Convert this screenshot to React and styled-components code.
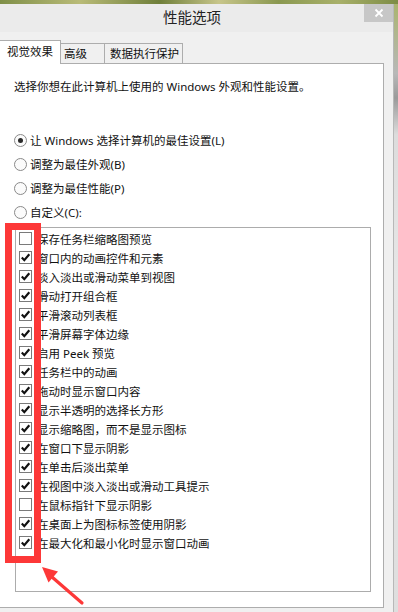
import React from "react";
import styled, { createGlobalStyle } from "styled-components";

const Global = createGlobalStyle`
  html, body { margin: 0; padding: 0; }
  body {
    width: 398px; height: 612px; overflow: hidden;
    font-family: "Noto Sans", "Noto Sans CJK SC", sans-serif;
  }
  * { box-sizing: border-box; }
`;

const Page = styled.div`
  position: relative;
  width: 398px;
  height: 612px;
  display: flex;
  padding: 4px 4px 0 0;
  background:
    linear-gradient(90deg, #7f8f48 0%, #b9bb78 20%, #6f7f3a 40%, #c7c58a 55%, #8a9850 70%, #a8b06a 85%, #7d8c45 100%) top / 100% 4px no-repeat,
    linear-gradient(180deg, #a9b46a 0%, #b8b8b8 12%, #9a9a9a 16%, #dcdcdc 22%, #e6e6e6 45%, #dedede 100%);
`;

const Window = styled.div`
  flex: 1;
  display: flex;
  flex-direction: column;
  background: #f0f0f0;
  border-right: 1px solid #b8b8b8;
`;

const TitleBar = styled.div`
  height: 28px;
  display: grid;
  grid-template-columns: 1fr auto 1fr;
  align-items: start;
  background: #ebebeb;
`;

const Title = styled.div`
  grid-column: 2;
  padding: 4px 9px 0 0;
  font-size: 14.5px;
  line-height: 18px;
  color: #222;
  font-family: "Noto Sans CJK SC", sans-serif;
`;

const CloseButton = styled.div`
  grid-column: 3;
  justify-self: end;
  width: 29px;
  height: 18px;
  background: #c7c7c7;
  display: flex;
  align-items: center;
  justify-content: center;
`;

const Body = styled.div`
  flex: 1;
  display: flex;
  flex-direction: column;
  padding: 8px 9px 0 0;
`;

const TabStrip = styled.div`
  height: 23px;
  display: flex;
  align-items: flex-end;
  position: relative;
  z-index: 1;
`;

const Tab = styled.div`
  width: ${(p) => p.$w}px;
  height: ${(p) => (p.$active ? 24 : 20)}px;
  margin-bottom: ${(p) => (p.$active ? -1 : 0)}px;
  padding-left: ${(p) => p.$pl}px;
  padding-top: ${(p) => (p.$active ? 2 : 1)}px;
  background: ${(p) => (p.$active ? "#ffffff" : "#f0f0f0")};
  border: 1px solid #adadad;
  border-left: ${(p) => (p.$first ? "none" : "1px solid #adadad")};
  border-bottom: none;
  margin-left: ${(p) => (p.$overlap ? -1 : 0)}px;
  font-size: 11.5px;
  line-height: 18px;
  color: #111;
  white-space: nowrap;
`;

const Panel = styled.div`
  width: 384px;
  height: 545px;
  background: #ffffff;
  border: 1px solid #adadad;
  border-left: none;
  padding: 13px 0 0 14px;
  display: flex;
  flex-direction: column;
`;

const Description = styled.div`
  font-size: 11.5px;
  line-height: 19px;
  color: #111;
  white-space: nowrap;
`;

const RadioGroup = styled.div`
  margin-top: 32px;
  display: flex;
  flex-direction: column;
`;

const RadioRow = styled.div`
  height: 24px;
  display: flex;
  align-items: center;
  gap: 3px;
  font-size: 11.5px;
  color: #111;
  white-space: nowrap;
`;

const RadioCircle = styled.span`
  width: 13px;
  height: 13px;
  border-radius: 50%;
  border: 1px solid #8a8a8a;
  background: #fbfbfb;
  display: flex;
  align-items: center;
  justify-content: center;
  flex-shrink: 0;
  &::after {
    content: "";
    width: 5px;
    height: 5px;
    border-radius: 50%;
    background: ${(p) => (p.$checked ? "#2a2a2a" : "transparent")};
  }
`;

const ListBox = styled.div`
  margin: 3px 0 0 1px;
  width: 356px;
  height: 365px;
  border: 1px solid #acacac;
  padding: 1px 0 0 3px;
  display: flex;
  flex-direction: column;
`;

const CheckRow = styled.div`
  height: 19px;
  display: flex;
  align-items: center;
  gap: 5px;
  font-size: 11.5px;
  color: #111;
  white-space: nowrap;
`;

const CheckBox = styled.span`
  width: 13px;
  height: 13px;
  border: 1px solid #7a7a7a;
  background: #ffffff;
  display: flex;
  align-items: center;
  justify-content: center;
  flex-shrink: 0;
`;

const Highlight = styled.div`
  position: absolute;
  left: 5px;
  top: 223px;
  width: 36px;
  height: 340px;
  border: 7px solid #fd3838;
  pointer-events: none;
`;

const Arrow = styled.svg`
  position: absolute;
  left: 0;
  top: 0;
  pointer-events: none;
`;

const Check = () => (
  <svg width="11" height="11" viewBox="0 0 11 11">
    <path d="M1.8 5.6 L4.3 8.2 L9.3 2.3" fill="none" stroke="#111" strokeWidth="2.2" />
  </svg>
);

const options = [
  ["保存任务栏缩略图预览", false],
  ["窗口内的动画控件和元素", true],
  ["淡入淡出或滑动菜单到视图", true],
  ["滑动打开组合框", true],
  ["平滑滚动列表框", true],
  ["平滑屏幕字体边缘", true],
  ["启用 Peek 预览", true],
  ["任务栏中的动画", true],
  ["拖动时显示窗口内容", true],
  ["显示半透明的选择长方形", true],
  ["显示缩略图，而不是显示图标", true],
  ["在窗口下显示阴影", true],
  ["在单击后淡出菜单", true],
  ["在视图中淡入淡出或滑动工具提示", true],
  ["在鼠标指针下显示阴影", false],
  ["在桌面上为图标标签使用阴影", true],
  ["在最大化和最小化时显示窗口动画", true],
];

const radios = [
  ["让 Windows 选择计算机的最佳设置(L)", true],
  ["调整为最佳外观(B)", false],
  ["调整为最佳性能(P)", false],
  ["自定义(C):", false],
];

export default function App() {
  return (
    <>
      <Global />
      <Page>
        <Window>
          <TitleBar>
            <Title>性能选项</Title>
            <CloseButton>
              <svg width="10" height="10" viewBox="0 0 10 10">
                <path d="M1.5 1.5 L8.5 8.5 M8.5 1.5 L1.5 8.5" stroke="#fff" strokeWidth="1.8" />
              </svg>
            </CloseButton>
          </TitleBar>
          <Body>
            <TabStrip>
              <Tab $active $first $w={61} $pl={7}>视觉效果</Tab>
              <Tab $w={45} $pl={3} $overlap>高级</Tab>
              <Tab $w={79} $pl={5} $overlap>数据执行保护</Tab>
            </TabStrip>
            <Panel>
              <Description>选择你想在此计算机上使用的 Windows 外观和性能设置。</Description>
              <RadioGroup>
                {radios.map(([label, checked]) => (
                  <RadioRow key={label}>
                    <RadioCircle $checked={checked} />
                    {label}
                  </RadioRow>
                ))}
              </RadioGroup>
              <ListBox>
                {options.map(([label, checked]) => (
                  <CheckRow key={label}>
                    <CheckBox>{checked && <Check />}</CheckBox>
                    {label}
                  </CheckRow>
                ))}
              </ListBox>
            </Panel>
          </Body>
        </Window>
        <Highlight />
        <Arrow width="398" height="612" viewBox="0 0 398 612">
          <path d="M82 603 L52 577" stroke="#fd3838" strokeWidth="3.2" strokeLinecap="round" />
          <polygon points="42,567 58,571.5 48.5,582.5" fill="#fd3838" />
        </Arrow>
      </Page>
    </>
  );
}
